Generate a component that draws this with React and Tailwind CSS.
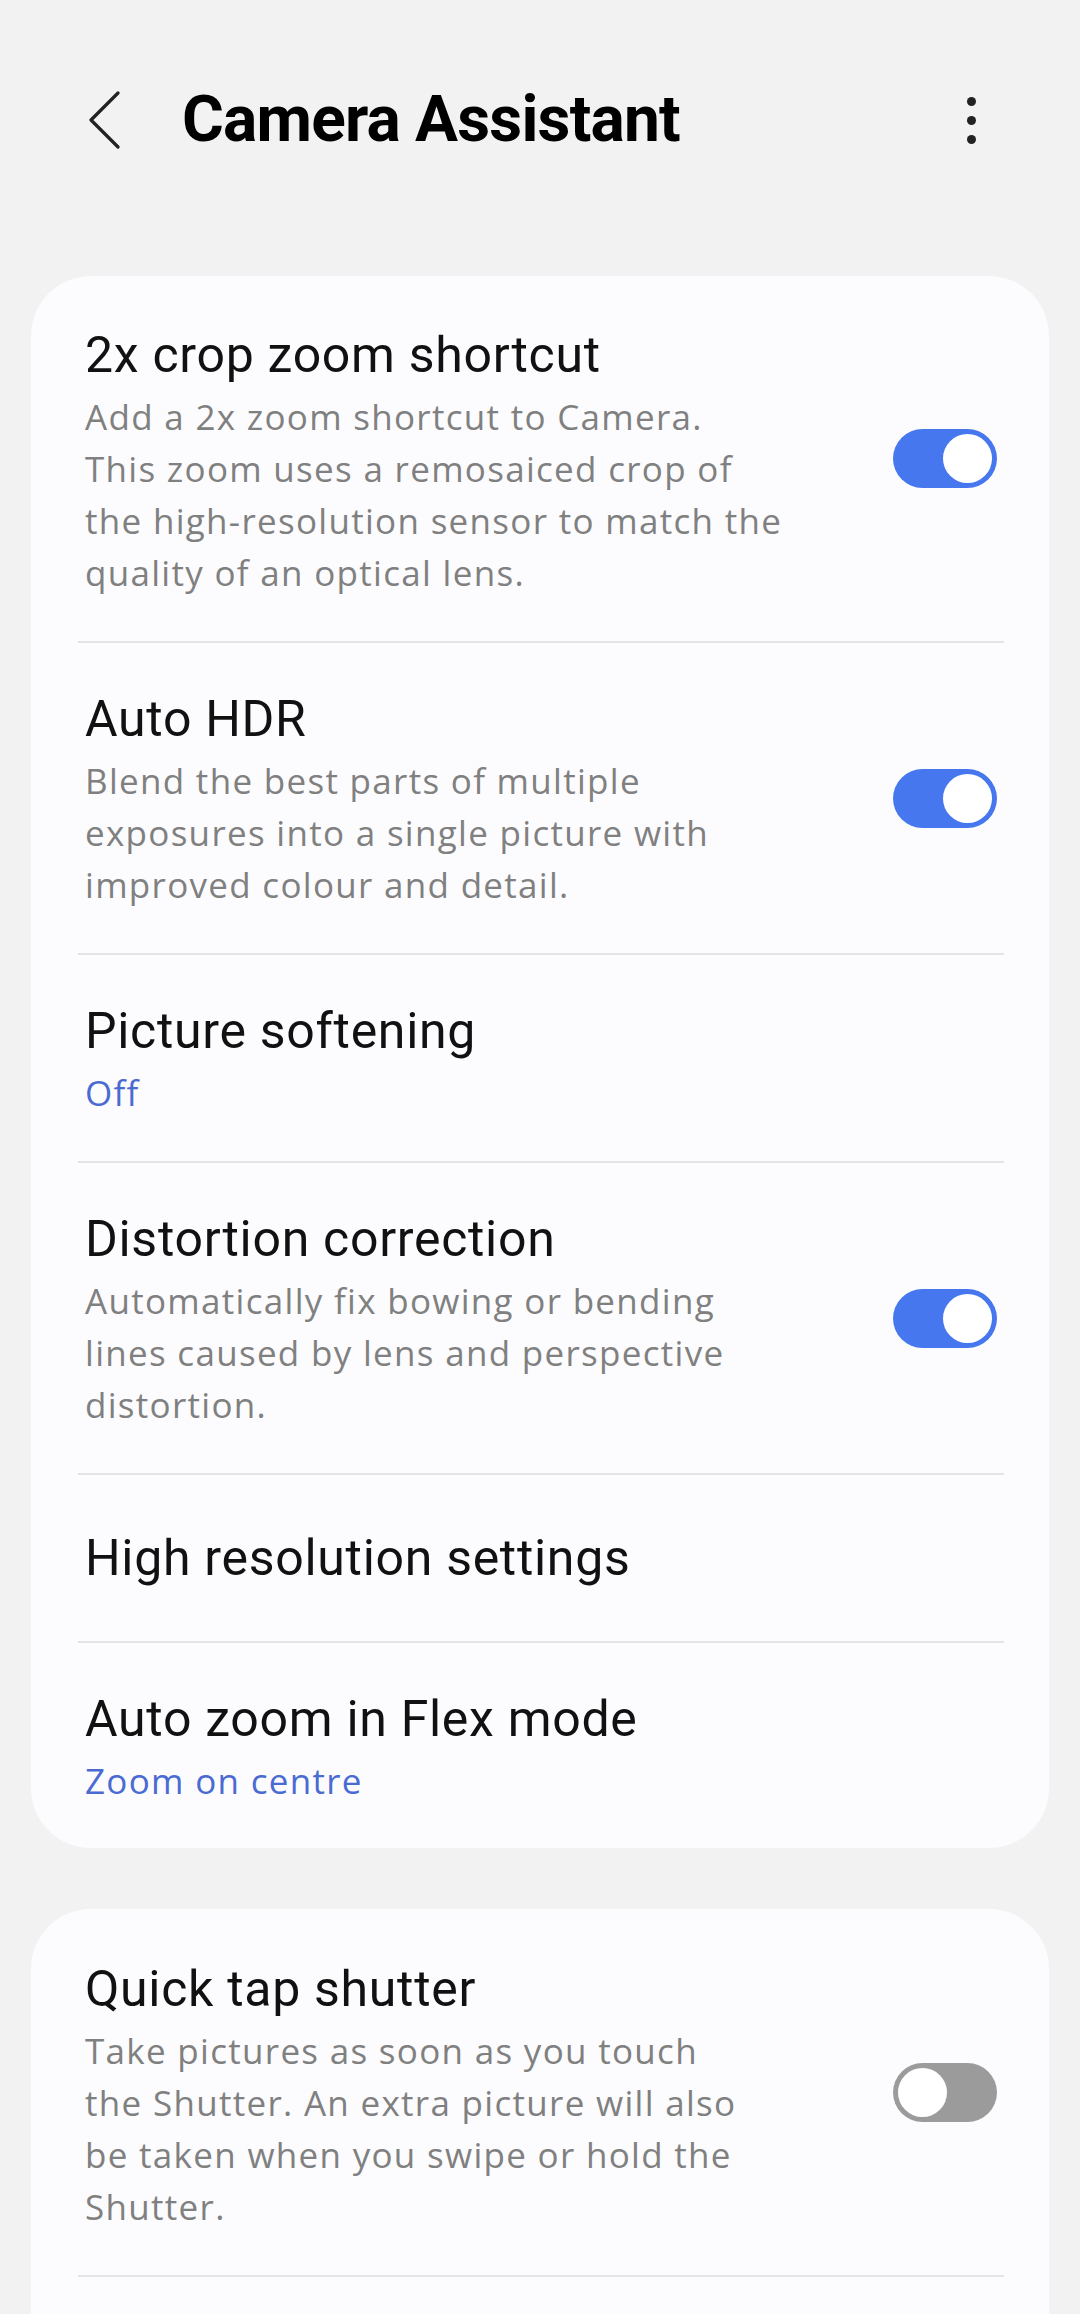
import React from 'react';

const Toggle = ({ on }) => (
  <div
    className={`relative w-[104px] h-[59px] rounded-full shrink-0 ${on ? 'bg-[#4677ee]' : 'bg-[#9b9b9b]'}`}
  >
    <div
      className={`absolute top-[5px] w-[49px] h-[49px] rounded-full bg-white ${on ? 'right-[5px]' : 'left-[5px]'}`}
    />
  </div>
);

const Divider = () => <div className="h-[2px] ml-[47px] mr-[45px] bg-[#e4e4e6]" />;

const Title = ({ children }) => (
  <div className="text-[50px] leading-[60px] tracking-[0.7px] text-[#111]">{children}</div>
);

const Sub = ({ children, blue }) => (
  <div
    className={`mt-[6px] font-['Open_Sans',sans-serif] text-[35px] leading-[52px] tracking-[1.3px] ${blue ? 'text-[#4a6bd1]' : 'text-[#808080]'}`}
  >
    {children}
  </div>
);

const Row = ({ title, lines, value, toggle, pt = 'pt-[46px]', pb = 'pb-[42px]' }) => (
  <div className="flex items-stretch pl-[54px] pr-[52px]">
    <div className={`flex-1 min-w-0 ${pt} ${pb}`}>
      <Title>{title}</Title>
      {lines && (
        <Sub>
          {lines.map((l) => (
            <div key={l} className="whitespace-nowrap">{l}</div>
          ))}
        </Sub>
      )}
      {value && <Sub blue>{value}</Sub>}
    </div>
    {toggle !== undefined && (
      <div className="flex items-center">
        <Toggle on={toggle} />
      </div>
    )}
  </div>
);

export default function App() {
  return (
    <div className="min-h-[2314px] bg-[#f2f2f2] font-['Roboto',sans-serif] overflow-hidden">
      {/* top bar */}
      <div className="flex items-center h-[240px]">
        <svg className="ml-[88px]" width="32" height="58" viewBox="0 0 32 58">
          <polyline points="30,2 3,29 30,56" fill="none" stroke="#222" strokeWidth="3.2" strokeLinecap="round" strokeLinejoin="round" />
        </svg>
        <div className="ml-[62px] flex-1 text-[64px] font-bold text-black tracking-[-0.8px]">Camera Assistant</div>
        <div className="mr-[104px] flex flex-col gap-[10px] items-center">
          <div className="w-[9px] h-[9px] rounded-full bg-[#222]" />
          <div className="w-[9px] h-[9px] rounded-full bg-[#222]" />
          <div className="w-[9px] h-[9px] rounded-full bg-[#222]" />
        </div>
      </div>

      <div className="mt-[36px] mx-[31px] rounded-[60px] bg-[#fcfcfe]">
        <Row
          pt="pt-[49px]"
          title="2x crop zoom shortcut"
          lines={[
            'Add a 2x zoom shortcut to Camera.',
            'This zoom uses a remosaiced crop of',
            'the high-resolution sensor to match the',
            'quality of an optical lens.',
          ]}
          toggle={true}
        />
        <Divider />
        <Row
          title="Auto HDR"
          lines={[
            'Blend the best parts of multiple',
            'exposures into a single picture with',
            'improved colour and detail.',
          ]}
          toggle={true}
        />
        <Divider />
        <Row title="Picture softening" value="Off" />
        <Divider />
        <Row
          title="Distortion correction"
          lines={[
            'Automatically fix bowing or bending',
            'lines caused by lens and perspective',
            'distortion.',
          ]}
          toggle={true}
        />
        <Divider />
        <Row pt="pt-[53px]" pb="pb-[53px]" title="High resolution settings" />
        <Divider />
        <Row pb="pb-[41px]" title="Auto zoom in Flex mode" value="Zoom on centre" />
      </div>

      <div className="mt-[61px] mx-[31px] rounded-t-[60px] bg-[#fcfcfe] min-h-[420px]">
        <Row
          pt="pt-[50px]"
          pb="pb-[42px]"
          title="Quick tap shutter"
          lines={[
            'Take pictures as soon as you touch',
            'the Shutter. An extra picture will also',
            'be taken when you swipe or hold the',
            'Shutter.',
          ]}
          toggle={false}
        />
        <Divider />
      </div>
    </div>
  );
}
